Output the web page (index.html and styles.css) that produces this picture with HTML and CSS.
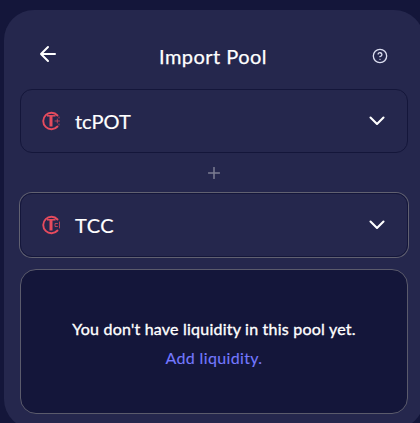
FILE: index.html
```html
<!DOCTYPE html>
<html lang="en">
<head>
<meta charset="utf-8">
<title>Import Pool</title>
<link rel="stylesheet" href="styles.css">
</head>
<body>
<main class="card">
  <header class="header">
    <svg class="back" viewBox="0 0 24 24"><path d="M19 12H5M12 19l-7-7 7-7"/></svg>
    <h1 class="title">Import Pool</h1>
    <svg class="help" viewBox="0 0 24 24"><circle cx="12" cy="12" r="10"/><path d="M9.1 9a3 3 0 0 1 5.800 1c0 2-3 3-3 3M12 17h.01"/></svg>
  </header>
  <button class="token">
    <svg class="logo" viewBox="0 0 20 20"><path class="ring" d="M16.500 4.500A8.200 8.200 0 1 0 16.500 15.500"/><path class="bar" d="M8.500 4.500v11h3v-11z"/><path class="top" d="M6 4.800h8.500"/><path class="mark" d="M14 10h4.500M16.300 8v4M18 6v1M18 13v1"/></svg>
    <span class="name pot">tcPOT</span>
    <svg class="chevron" viewBox="0 0 16 10"><path d="M1.500 1.500 8 8l6.500-6.500"/></svg>
  </button>
  <div class="plus"><svg viewBox="0 0 12 12"><path d="M6 .5v11M.5 6h11"/></svg></div>
  <button class="token selected">
    <svg class="logo" viewBox="0 0 20 20"><path class="ring" d="M16.500 4.500A8.200 8.200 0 1 0 16.500 15.500"/><path class="bar" d="M8.500 4.500v11h3v-11z"/><path class="top" d="M6 4.800h8.500"/><path class="mark" d="M16.500 8.500H14v3h2.500M18.500 7v6"/></svg>
    <span class="name tcc">TCC</span>
    <svg class="chevron" viewBox="0 0 16 10"><path d="M1.500 1.500 8 8l6.500-6.500"/></svg>
  </button>
  <section class="notice">
    <p class="message">You don't have liquidity in this pool yet.</p>
    <a class="link">Add liquidity.</a>
  </section>
</main>
</body>
</html>
```
FILE: styles.css
```css
* { box-sizing: border-box; }
body {
  margin: 0;
  height: 423px;
  overflow: hidden;
  background: #14163a;
  font-family: Lato, "Liberation Sans", sans-serif;
  color: #fff;
}
svg { display: block; fill: none; stroke: currentColor; stroke-linecap: round; stroke-linejoin: round; flex: none; }
.card {
  width: 420px;
  height: 419px;
  margin: 10px 0 0 4px;
  padding: 0 16px;
  border-radius: 30px;
  background: #25274d;
}
.header {
  height: 79px;
  padding: 14px 20px 0 16px;
  display: flex;
  align-items: center;
  justify-content: space-between;
}
.back { width: 24px; height: 24px; stroke-width: 2; margin-top: -6px; }
.title { margin: -2px 6px 0 0; font-size: 20px; line-height: 24px; font-weight: 400; letter-spacing: .45px; -webkit-text-stroke: .25px; }
.help { width: 16px; height: 16px; stroke-width: 2; color: #dcdef0; margin-top: -1px; }
.token {
  width: 388px;
  height: 64px;
  padding: 0 22px 0 20px;
  display: flex;
  align-items: center;
  border: 1px solid #14163a;
  border-radius: 12px;
  background: transparent;
  color: #fff;
  font: inherit;
}
.selected { box-shadow: 0 0 0 1px #616171; }
.logo { width: 20px; height: 20px; color: #e64b5e; }
.ring { stroke-width: 1.900; }
.bar { fill: currentColor; stroke: none; }
.top { stroke-width: 1.500; stroke-linecap: butt; }
.mark { stroke-width: 1; opacity: .75; }
.name { margin-left: 14px; font-size: 20px; line-height: 24px; -webkit-text-stroke: .2px; }
.tcc { letter-spacing: .5px; }
.chevron { width: 16px; height: 10px; margin-left: auto; stroke-width: 2.100; }
.plus { height: 40px; display: flex; align-items: center; justify-content: center; color: #7c7d92; }
.plus svg { width: 12px; height: 12px; stroke-width: 1.500; }
.notice {
  width: 388px;
  height: 145px;
  margin-top: 12px;
  padding-top: 49px;
  border: 1px solid #5b5b6c;
  border-radius: 16px;
  background: #14163a;
  text-align: center;
  font-size: 16px;
}
.message { margin: 0; line-height: 20px; letter-spacing: .22px; -webkit-text-stroke: .35px; }
.link { display: block; margin-top: 9px; line-height: 20px; letter-spacing: .35px; color: #7479ff; -webkit-text-stroke: .1px; }
```
